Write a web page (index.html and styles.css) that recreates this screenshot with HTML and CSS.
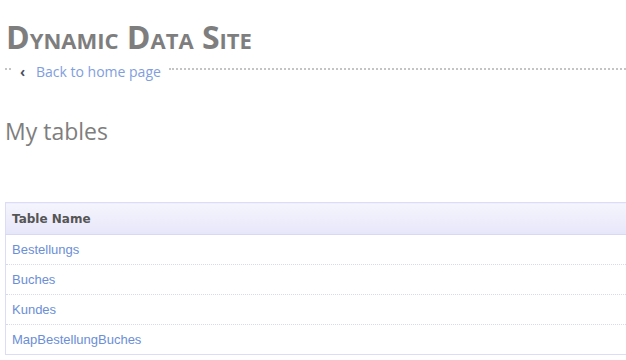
FILE: index.html
```html
<!DOCTYPE html>
<html lang="en">
    <head>
        <title>Dynamic Data Site</title>
        <meta charset="utf-8" />
        <link rel="stylesheet" href="styles.css">
    </head>
    <body>
        <div id="page">
            <h1 class="site-tit">Dynamic Data Site</h1>
            <div class="back-row">
                <span class="dots dots-short"></span>
                <a class="back-link" href="#"><span class="chev">&lsaquo;</span>Back to home page</a>
                <span class="dots"></span>
            </div>

            <h2 class="sub-tit">My tables</h2>

            <div class="dd-tbl">
                <table>
                    <thead>
                        <tr>
                            <th scope="col">Table Name</th>
                        </tr>
                    </thead>
                    <tbody class="table-data"></tbody>
                </table>
            </div>
        </div>

        <script>
            const tables = ["Bestellungs", "Buches", "Kundes", "MapBestellungBuches"];

            const createRow = (name) => {
                return `<tr><td><a href="#">${name}</a></td></tr>`;
            };

            (function () {
                document.querySelector(".table-data").innerHTML = tables.map(createRow).join("");
            })();
        </script>
    </body>
</html>
```

FILE: styles.css
```css
* {
    margin: 0;
    padding: 0;
    box-sizing: border-box;
}

body {
    font-family: "Liberation Sans", "DejaVu Sans", sans-serif;
    background: #fff;
    overflow: hidden;
}

#page {
    padding: 18px 0 0 5px;
}

.site-tit {
    font-family: "Open Sans", "DejaVu Sans", sans-serif;
    font-variant: small-caps;
    font-size: 32px;
    font-weight: 700;
    color: #7e7e7e;
    line-height: 38px;
    padding-left: 1px;
}

.back-row {
    display: flex;
    align-items: center;
    height: 18px;
    margin-top: 6px;
}

.dots {
    flex: 1;
    height: 0;
    border-top: 2px dotted #c4c4c4;
    margin-top: -5px;
}

.dots-short {
    flex: 0 0 6px;
}

.back-link {
    font-family: "Open Sans", "DejaVu Sans", sans-serif;
    font-size: 14px;
    color: #7f9ede;
    text-decoration: none;
    padding: 0 8px 0 9px;
}

.chev {
    display: inline-block;
    color: #4a5060;
    font-weight: 700;
    width: 16px;
}

.sub-tit {
    font-family: "Open Sans", "DejaVu Sans", sans-serif;
    font-size: 23px;
    font-weight: 400;
    color: #7e7e7e;
    margin-top: 36px;
    line-height: 30px;
}

.dd-tbl {
    margin-top: 56px;
}

.dd-tbl table {
    width: 100%;
    border-collapse: collapse;
    border: 1px solid #dcdcf6;
    border-right: none;
}

.dd-tbl th {
    text-align: left;
    height: 32px;
    padding: 0 6px;
    font-family: "DejaVu Sans", sans-serif;
    font-size: 12px;
    font-weight: 700;
    color: #555;
    background: linear-gradient(#f5f5fd, #e6e6fa);
    border-bottom: 1px solid #d8d8f4;
}

.dd-tbl td {
    height: 30px;
    padding: 0 6px;
    font-size: 13px;
    border-bottom: 1px dotted #d8d8f4;
}

.dd-tbl tr:last-child td {
    border-bottom: 1px solid #dcdcf6;
}

.dd-tbl td a {
    color: #6b8ed6;
    text-decoration: none;
}
```
